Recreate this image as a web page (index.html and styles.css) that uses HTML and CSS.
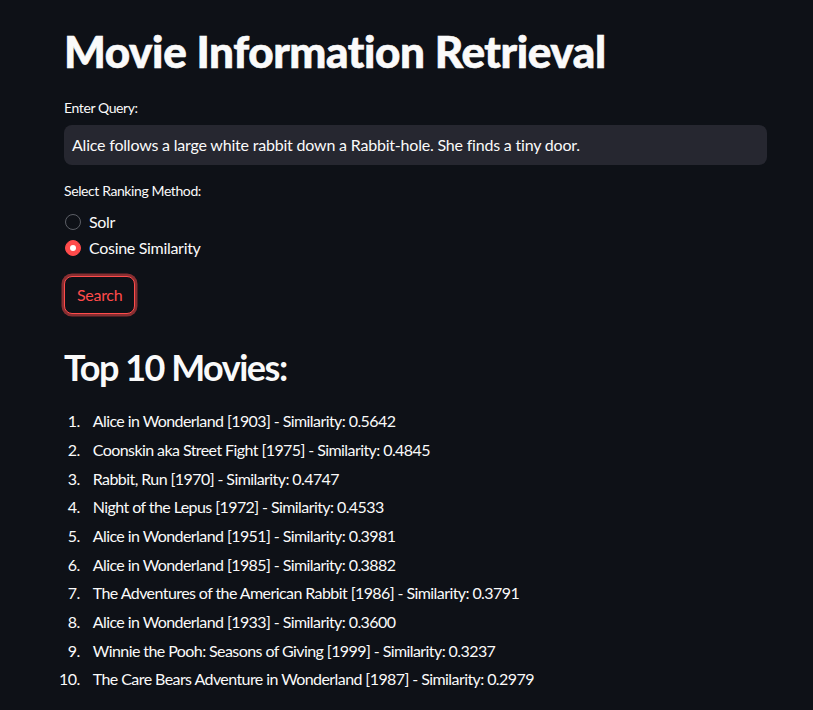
FILE: index.html
```html
<!DOCTYPE html>
<html lang="en">
<head>
<meta charset="utf-8">
<title>Movie Information Retrieval</title>
<link rel="stylesheet" href="styles.css">
</head>
<body>
<main class="app">
  <h1 class="title">Movie Information Retrieval</h1>

  <div class="field">
    <label class="field-label" for="q">Enter Query:</label>
    <div class="input-box" id="q">Alice follows a large white rabbit down a Rabbit-hole. She finds a tiny door.</div>
  </div>

  <div class="field field-radio">
    <div class="field-label">Select Ranking Method:</div>
    <div class="radio-group">
      <div class="radio-row"><span class="radio"></span><span class="radio-text">Solr</span></div>
      <div class="radio-row"><span class="radio radio-on"></span><span class="radio-text">Cosine Similarity</span></div>
    </div>
  </div>

  <div class="btn-wrap"><button class="btn">Search</button></div>

  <h2 class="subtitle">Top 10 Movies:</h2>

  <ol class="results">
    <li>Alice in Wonderland [1903] - Similarity: 0.5642</li>
    <li>Coonskin aka Street Fight [1975] - Similarity: 0.4845</li>
    <li>Rabbit, Run [1970] - Similarity: 0.4747</li>
    <li>Night of the Lepus [1972] - Similarity: 0.4533</li>
    <li>Alice in Wonderland [1951] - Similarity: 0.3981</li>
    <li>Alice in Wonderland [1985] - Similarity: 0.3882</li>
    <li>The Adventures of the American Rabbit [1986] - Similarity: 0.3791</li>
    <li>Alice in Wonderland [1933] - Similarity: 0.3600</li>
    <li>Winnie the Pooh: Seasons of Giving [1999] - Similarity: 0.3237</li>
    <li>The Care Bears Adventure in Wonderland [1987] - Similarity: 0.2979</li>
  </ol>
</main>
</body>
</html>
```

FILE: styles.css
```css
* { box-sizing: border-box; }

html, body {
  margin: 0;
  padding: 0;
  background: #0e1117;
  color: #fafafa;
  font-family: Lato, "Source Sans Pro", "Noto Sans", sans-serif;
}

.app {
  width: 703px;
  margin-left: 64px;
  padding-top: 25px;
}

.title {
  margin: 0;
  font-size: 44px;
  line-height: 1.2;
  font-weight: 900;
  letter-spacing: -0.4px;
  -webkit-text-stroke: 0.6px #fafafa;
}

.field { margin-top: 19.6px; }
.field-radio { margin-top: 15.4px; }

.field-label {
  display: block;
  font-size: 14px;
  line-height: 22.4px;
  letter-spacing: -0.4px;
}

.input-box {
  margin-top: 5.2px;
  height: 40px;
  line-height: 40px;
  background: #262730;
  border-radius: 8px;
  padding: 0 8px;
  font-size: 16px;
  letter-spacing: -0.2px;
  white-space: nowrap;
  overflow: hidden;
}

.radio-group {
  margin-top: 6.2px;
  display: flex;
  flex-direction: column;
}

.radio-row {
  display: flex;
  align-items: center;
  height: 26px;
  gap: 8px;
  font-size: 16px;
  letter-spacing: -0.3px;
}

.radio {
  width: 16px;
  height: 16px;
  margin-left: 1px;
  border-radius: 50%;
  border: 1px solid #5c5f66;
  flex: none;
  display: flex;
  align-items: center;
  justify-content: center;
}

.radio-on {
  background: #ff4b4b;
  border-color: #ff4b4b;
}

.radio-on::after {
  content: "";
  width: 6px;
  height: 6px;
  border-radius: 50%;
  background: #ffffff;
}

.btn-wrap { margin-top: 15px; }

.btn {
  height: 38px;
  padding: 0 12px;
  background: #0e1117;
  color: #ff4b4b;
  border: 1px solid #ff4b4b;
  border-radius: 8px;
  box-shadow: 0 0 0 2.5px rgba(255, 75, 75, 0.5);
  font-family: inherit;
  font-size: 16px;
  letter-spacing: -0.3px;
  line-height: 1;
}

.subtitle {
  margin: 32.5px 0 0;
  font-size: 36px;
  line-height: 1.2;
  font-weight: 700;
  letter-spacing: -1.5px;
}

.results {
  margin: 18.6px 0 0;
  padding: 0;
  font-size: 16px;
  letter-spacing: -0.58px;
}

.results li {
  margin: 0 0 3.1px 19.2px;
  padding-left: 9.6px;
  line-height: 25.6px;
}
```
